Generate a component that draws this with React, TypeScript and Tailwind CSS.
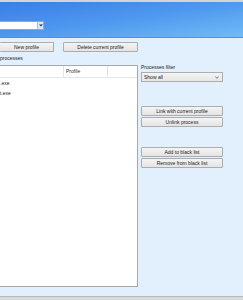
import React from 'react';

// Small Windows-style push button
function Btn({ label, className = '' }: { label: string; className?: string }) {
    return (
        <div
            className={`flex items-center justify-center h-[10px] border border-[#adadad] rounded-[1px] bg-gradient-to-b from-[#f4f4f4] to-[#e4e4e4] text-[5px] text-[#222] leading-none ${className}`}
        >
            {label}
        </div>
    );
}

export default function App() {
    return (
        <div className="w-[243px] h-[300px] overflow-hidden flex flex-col bg-[#e2f0fd] font-['Liberation_Sans',Arial,sans-serif]">
            {/* window top edge */}
            <div className="h-[2px] bg-[#d4d4d4]" />

            {/* blue header with profile picker */}
            <div className="h-[35px] bg-gradient-to-br from-[#3a7de8] via-[#4f98ef] to-[#70bbf6] pt-[19px]">
                <div className="flex w-[44px] h-[9px] bg-white border border-[#8aaad0] border-l-0">
                    <div className="flex-1" />
                    <div className="w-[6px] flex items-center justify-center bg-[#d9e6f5] border-l border-[#a9c2e0]">
                        <svg width="4" height="3" viewBox="0 0 4 3">
                            <path d="M0 0.5h4L2 2.5z" fill="#333" />
                        </svg>
                    </div>
                </div>
            </div>
            <div className="h-[1px] bg-[#4a93e4]" />

            {/* body */}
            <div className="flex-1 flex">
                <div className="w-[138px] flex flex-col">
                    <div className="flex gap-[9px] mt-[4px]">
                        <Btn label="New profile" className="w-[54px] border-l-0" />
                        <Btn label="Delete current profile" className="w-[75px]" />
                    </div>
                    <div className="h-[13px] flex items-center text-[5px] text-[#222] leading-none">processes</div>
                    <div className="h-[222px] bg-white border border-[#a9a9a9] border-l-0 flex flex-col">
                        <div className="flex h-[12px] border-b border-[#e5e5e5] text-[5px] text-[#333] leading-none">
                            <div className="w-[64px] border-r border-[#e5e5e5]" />
                            <div className="w-[44px] border-r border-[#e5e5e5] flex items-center pl-[2px]">Profile</div>
                            <div className="flex-1" />
                        </div>
                        <div className="text-[5px] text-[#222] leading-none pt-[3px] flex flex-col gap-[5px]">
                            <div className="h-[5px]">.exe</div>
                            <div className="h-[5px]">t.exe</div>
                        </div>
                    </div>
                </div>

                <div className="w-[82px] ml-[3px] flex flex-col pt-[27px]">
                    <div className="text-[5px] text-[#222] leading-none h-[7px]">Processes filter</div>
                    <div className="flex items-center h-[10px] border border-[#adadad] bg-gradient-to-b from-[#f4f4f4] to-[#e6e6e6] text-[5px] text-[#222] leading-none pl-[2px] pr-[3px]">
                        <span className="flex-1">Show all</span>
                        <svg width="4" height="3" viewBox="0 0 4 3">
                            <path d="M0.3 0.5L2 2.3 3.7 0.5" fill="none" stroke="#444" strokeWidth="0.7" />
                        </svg>
                    </div>
                    <div className="mt-[24px] flex flex-col gap-[1px]">
                        <Btn label="Link with current profile" />
                        <Btn label="Unlink process" />
                    </div>
                    <div className="mt-[20px] flex flex-col gap-[1px]">
                        <Btn label="Add to black list" />
                        <Btn label="Remove from black list" />
                    </div>
                </div>
            </div>

            {/* status bar edge */}
            <div className="h-[1px] bg-[#b9b9b9]" />
            <div className="h-[3px] bg-[#d9d9d9]" />
        </div>
    );
}
